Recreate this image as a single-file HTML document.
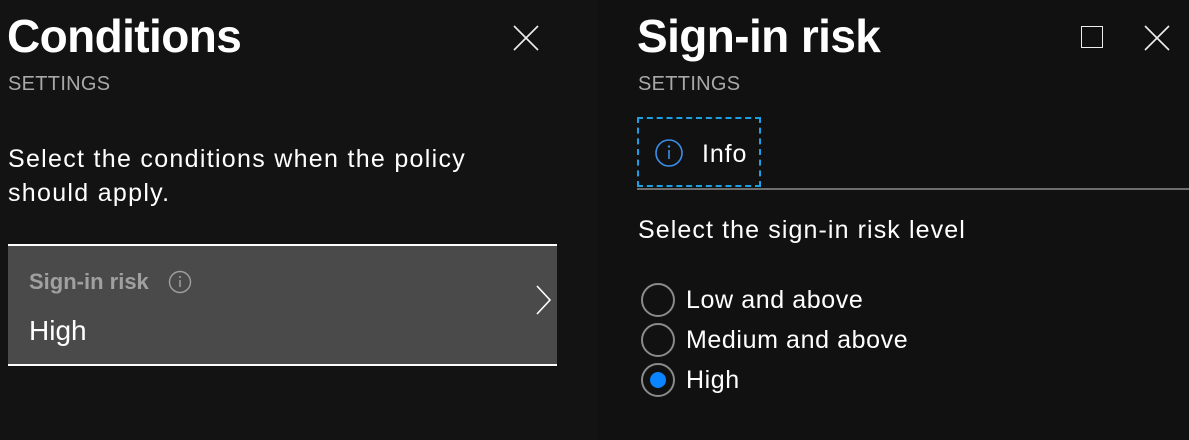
<!DOCTYPE html>
<html><head><style>
body{margin:0;width:1189px;height:440px;background:#111;overflow:hidden;font-family:"Liberation Sans",sans-serif;color:#fff;position:relative}
.a{position:absolute;white-space:nowrap}
.t{font-weight:bold;font-size:46px;letter-spacing:-0.6px}
.s{font-size:20px;color:#a8a8a8;letter-spacing:0.3px}
.p{font-size:25px;letter-spacing:0.9px}
</style></head><body>
<div class="a" style="left:0;top:0;width:597px;height:440px;background:#131313"></div>
<div class="a t" style="left:7px;top:9px">Conditions</div>
<svg class="a" style="left:513px;top:25px" width="26" height="26"><path d="M1 1L25 25M25 1L1 25" stroke="#eee" stroke-width="1.6"/></svg>
<div class="a s" style="left:8px;top:73px">SETTINGS</div>
<div class="a p" style="left:8px;top:142px;line-height:34px;letter-spacing:1.3px">Select the conditions when the policy<br>should apply.</div>
<div class="a" style="left:8px;top:244px;width:549px;height:118px;background:#4a4a4a;border-top:2px solid #fff;border-bottom:2px solid #fff"></div>
<div class="a" style="left:29px;top:269px;font-size:22px;color:#a0a0a0;font-weight:bold">Sign-in risk</div>
<svg class="a" style="left:168px;top:270px" width="24" height="24"><circle cx="12" cy="12" r="10.5" fill="none" stroke="#a0a0a0" stroke-width="1.4"/><path d="M12 10v7" stroke="#a0a0a0" stroke-width="1.5"/><circle cx="12" cy="7" r="1" fill="#a0a0a0"/></svg>
<div class="a" style="left:29px;top:315px;font-size:28px">High</div>
<svg class="a" style="left:535px;top:285px" width="18" height="30"><path d="M2 1L15 15L2 29" fill="none" stroke="#fff" stroke-width="1.6"/></svg>

<div class="a t" style="left:637px;top:9px">Sign-in risk</div>
<div class="a" style="left:1081px;top:26px;width:20px;height:20px;border:1.6px solid #eee"></div>
<svg class="a" style="left:1144px;top:25px" width="26" height="26"><path d="M1 1L25 25M25 1L1 25" stroke="#eee" stroke-width="1.6"/></svg>
<div class="a s" style="left:638px;top:73px">SETTINGS</div>
<div class="a" style="left:637px;top:117px;width:124px;height:70px;border:2px dashed #1ba1e2;box-sizing:border-box"></div>
<svg class="a" style="left:654px;top:138px" width="30" height="30"><circle cx="15" cy="15" r="13" fill="none" stroke="#3b8eea" stroke-width="1.6"/><path d="M15 12v9" stroke="#3b8eea" stroke-width="1.6"/><circle cx="15" cy="8.5" r="1.2" fill="#3b8eea"/></svg>
<div class="a p" style="left:702px;top:140px">Info</div>
<div class="a" style="left:637px;top:188px;width:552px;height:2px;background:#6e6e6e"></div>
<div class="a p" style="left:638px;top:216px;letter-spacing:1.1px">Select the sign-in risk level</div>
<svg class="a" style="left:638px;top:283px" width="40" height="120"><circle cx="20" cy="17" r="16" fill="none" stroke="#8a8a8a" stroke-width="2"/><circle cx="20" cy="57" r="16" fill="none" stroke="#8a8a8a" stroke-width="2"/><circle cx="20" cy="97" r="16" fill="none" stroke="#8a8a8a" stroke-width="2"/><circle cx="20" cy="97" r="8" fill="#0a84ff"/></svg>
<div class="a p" style="left:686px;top:286px;letter-spacing:0.6px">Low and above</div>
<div class="a p" style="left:686px;top:326px;letter-spacing:0.6px">Medium and above</div>
<div class="a p" style="left:686px;top:366px;letter-spacing:0.6px">High</div>
</body></html>
